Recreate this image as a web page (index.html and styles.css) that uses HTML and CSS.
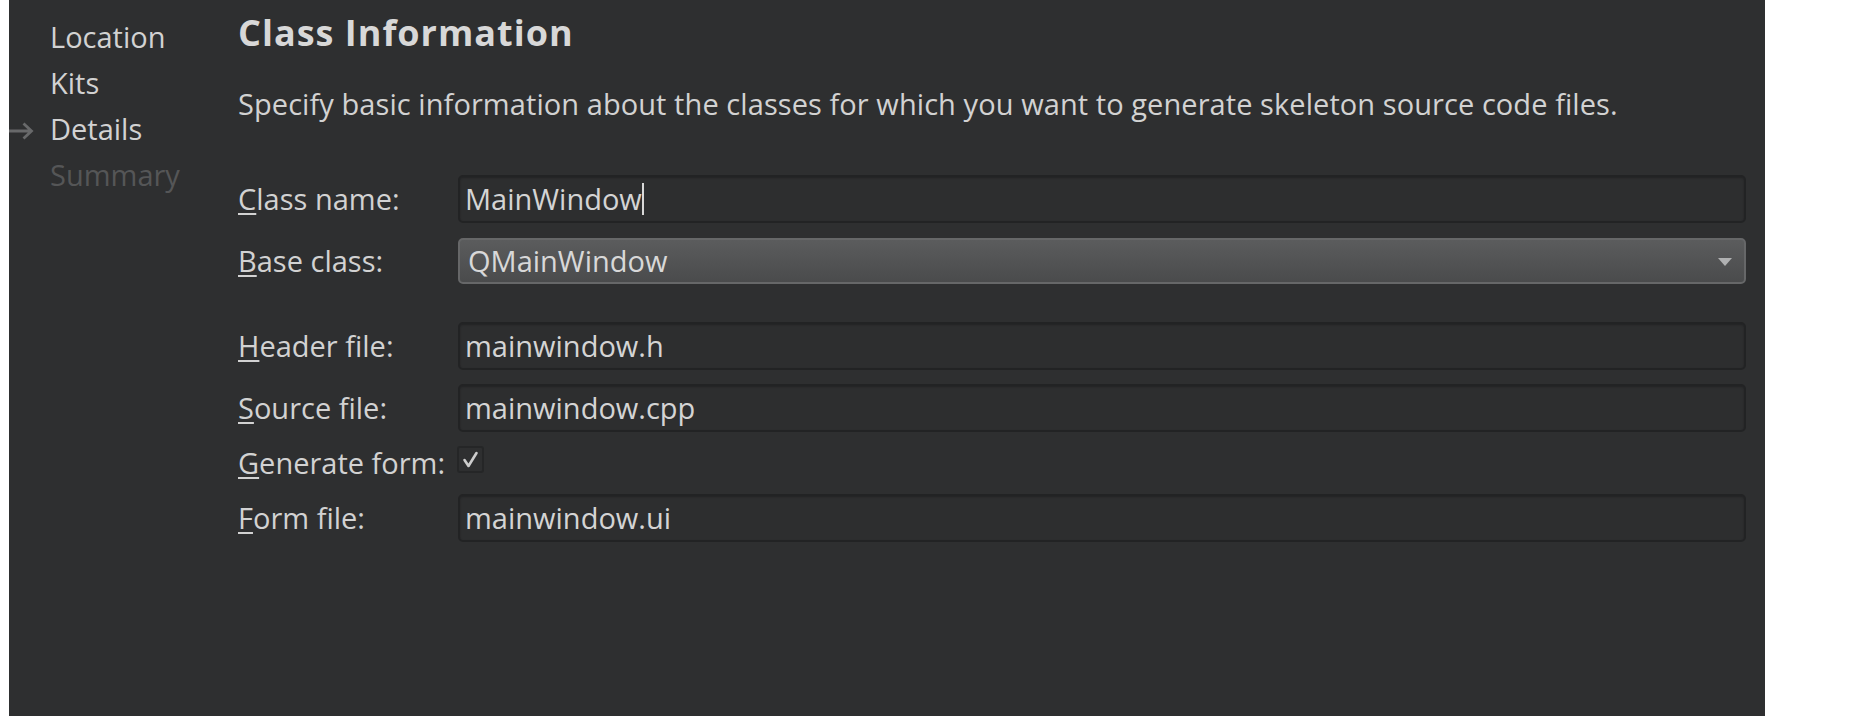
FILE: index.html
```html
<!DOCTYPE html>
<html lang="en">
<head>
<meta charset="utf-8">
<title>Class Information</title>
<link rel="stylesheet" href="styles.css">
</head>
<body>
<div class="wizard">
  <nav class="steps">
    <span class="mark"></span><span class="step">Location</span>
    <span class="mark"></span><span class="step">Kits</span>
    <span class="mark"><svg class="arrow" width="25" height="18" viewBox="0 0 25 18"><path d="M0 9H22.5M14.5 1.5L22.5 9L14.5 16.5" fill="none" stroke="#68696a" stroke-width="2.8"/></svg></span><span class="step">Details</span>
    <span class="mark"></span><span class="step step-off">Summary</span>
  </nav>
  <main class="page">
    <h1 class="title">Class Information</h1>
    <p class="desc">Specify basic information about the classes for which you want to generate skeleton source code files.</p>
    <div class="form">
      <label class="lbl"><u>C</u>lass name:</label>
      <div class="field"><span>MainWindow</span><span class="caret"></span></div>

      <label class="lbl"><u>B</u>ase class:</label>
      <div class="combo"><span>QMainWindow</span><span class="tri"></span></div>

      <div class="spacer"></div>

      <label class="lbl"><u>H</u>eader file:</label>
      <div class="field"><span>mainwindow.h</span></div>

      <label class="lbl"><u>S</u>ource file:</label>
      <div class="field"><span>mainwindow.cpp</span></div>

      <label class="lbl lbl-check"><u>G</u>enerate form:</label>
      <div class="checkrow"><span class="check"><svg width="19" height="19" viewBox="0 0 19 19"><path d="M3.5 10L7.5 16L15.5 3" fill="none" stroke="#cdcdcd" stroke-width="2.6" stroke-linecap="round" stroke-linejoin="round"/></svg></span></div>

      <label class="lbl"><u>F</u>orm file:</label>
      <div class="field"><span>mainwindow.ui</span></div>
    </div>
  </main>
</div>
</body>
</html>
```
FILE: styles.css
```css
html, body {
  margin: 0;
  padding: 0;
  background: #ffffff;
}

body {
  font-family: "Open Sans", "Noto Sans", sans-serif;
  font-size: 29px;
  color: #d2d2d2;
}

.wizard {
  margin-left: 9px;
  width: 1756px;
  height: 716px;
  background: #2e2f30;
  display: flex;
  overflow: hidden;
}

.steps {
  width: 229px;
  flex: none;
  padding-top: 14px;
  display: grid;
  grid-template-columns: 41px 1fr;
  grid-auto-rows: 46px;
  align-content: start;
  align-items: center;
}

.mark {
  display: flex;
  align-items: center;
  height: 46px;
  padding-top: 4px;
  box-sizing: border-box;
}

.step {
  line-height: 46px;
  color: #d2d2d2;
  white-space: nowrap;
}

.step-off {
  color: #555657;
}

.page {
  flex: 1;
  padding: 13px 19px 0 0;
  min-width: 0;
}

.title {
  margin: 0;
  font-size: 36px;
  line-height: 40px;
  font-weight: 700;
  color: #d8d8d8;
  letter-spacing: 1px;
}

.desc {
  margin: 31px 0 0;
  line-height: 40px;
  white-space: nowrap;
  letter-spacing: 0.07px;
}

.form {
  margin-top: 51px;
  display: grid;
  grid-template-columns: 220px 1fr;
  row-gap: 14px;
  align-items: center;
}

.lbl {
  line-height: 40px;
  white-space: nowrap;
}

.lbl u {
  text-decoration-thickness: 2px;
  text-underline-offset: 3px;
}

.lbl-check {
  line-height: 34px;
  align-self: start;
}

.field {
  height: 48px;
  box-sizing: border-box;
  border: 2px solid #222324;
  border-radius: 5px;
  background: #2d2e2f;
  box-shadow: inset 0 1px 2px rgba(0, 0, 0, 0.25);
  display: flex;
  align-items: center;
  padding-left: 5px;
  line-height: 40px;
  color: #d4d4d4;
}

.caret {
  display: inline-block;
  width: 2px;
  height: 32px;
  background: #d8d8d8;
}

.combo {
  height: 46px;
  margin-top: 1px;
  box-sizing: border-box;
  border: 2px solid #666768;
  border-radius: 5px;
  background: linear-gradient(#5b5c5d, #4a4b4c);
  display: flex;
  align-items: center;
  justify-content: space-between;
  padding: 0 12px 0 8px;
  line-height: 40px;
  color: #d8d8d8;
}

.tri {
  width: 0;
  height: 0;
  border-left: 7.5px solid transparent;
  border-right: 7.5px solid transparent;
  border-top: 8px solid #b0b1b2;
  margin-top: 2px;
}

.spacer {
  grid-column: 1 / -1;
  height: 10px;
}

.checkrow {
  height: 34px;
  display: flex;
  align-items: flex-start;
}

.check {
  width: 27px;
  height: 27px;
  box-sizing: border-box;
  border: 2px solid #252627;
  border-radius: 3px;
  display: flex;
  align-items: center;
  justify-content: center;
  margin-left: -1px;
}
```
